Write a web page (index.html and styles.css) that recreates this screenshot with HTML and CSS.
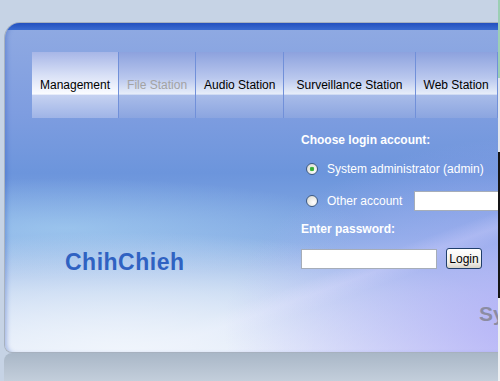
FILE: index.html
```html
<!DOCTYPE html>
<html lang="en">
<head>
<meta charset="UTF-8">
<title>Login</title>
<link rel="stylesheet" href="styles.css">
</head>
<body>
    <div class="page">
        <div class="panel">
            <div class="panel-band"></div>

            <!-- Station tabs -->
            <ul class="tabs">
                <li class="tab active">Management</li>
                <li class="tab disabled">File Station</li>
                <li class="tab">Audio Station</li>
                <li class="tab wide">Surveillance Station</li>
                <li class="tab">Web Station</li>
            </ul>

            <div class="login-area">
                <div class="brand">ChihChieh</div>

                <!-- Login form -->
                <form class="login-form">
                    <div class="form-label">Choose login account:</div>
                    <label class="option">
                        <span class="radio checked"></span>System administrator (admin)
                    </label>
                    <label class="option">
                        <span class="radio"></span>Other account
                        <input type="text" class="text-input account-input">
                    </label>
                    <div class="form-label">Enter password:</div>
                    <div class="password-row">
                        <input type="password" class="text-input password-input">
                        <button type="button" class="login-btn">Login</button>
                    </div>
                </form>
            </div>

            <div class="watermark">Synology</div>
        </div>
        <div class="reflection"></div>
        <div class="edge-strip"></div>
    </div>
</body>
</html>
```

FILE: styles.css
```css
body {
    margin: 0;
    background-color: #c6d3e5;
    font-family: "Liberation Sans", Arial, sans-serif;
    font-size: 12px;
    overflow: hidden;
}

.page {
    position: relative;
    width: 500px;
    height: 381px;
    padding-top: 22px;
    box-sizing: border-box;
    overflow: hidden;
}

/* Main panel */
.panel {
    position: relative;
    margin-left: 4px;
    width: 540px;
    height: 331px;
    box-sizing: border-box;
    border: 1px solid #a7b1bf;
    border-right: none;
    border-radius: 16px 0 0 8px;
    overflow: hidden;
    box-shadow: inset 4px 0 4px -2px rgba(45,85,190,0.35);
    background:
        radial-gradient(ellipse 320px 190px at 100% 92%, rgba(180,176,248,0.95), rgba(180,176,248,0)),
        radial-gradient(ellipse 420px 120px at 22% 100%, rgba(240,245,252,1), rgba(240,245,252,0)),
        radial-gradient(ellipse 300px 50px at 60px 205px, rgba(178,222,246,0.5), rgba(178,222,246,0)),
        linear-gradient(160deg, rgba(255,255,255,0) 70%, rgba(230,232,255,0.35) 73%, rgba(255,255,255,0) 76%),
        linear-gradient(180deg, #90aae2 0px, #7e9de0 90px, #6c95dc 150px, #85abe4 215px, #b6ceee 270px, #dce6f6 331px);
}

.panel-band {
    height: 7px;
    background: linear-gradient(#2350bf, #3a6bd0);
}

/* Tabs */
.tabs {
    list-style: none;
    margin: 22px 0 0 27px;
    padding: 0;
    display: flex;
    height: 66px;
}

.tab {
    display: flex;
    align-items: center;
    padding: 0 8px;
    color: #000;
    border-right: 1px solid #7190d9;
    background: linear-gradient(180deg, #8da2de 0%, #bac8ee 40%, #e8eef9 64%, #a9bce9 65%, #8ba5e0 100%);
}

.tab.wide {
    padding: 0 12px;
}

.tab.active {
    background: linear-gradient(180deg, #a7b6e7 0%, #d8e0f6 35%, #fbfcff 64%, #c6d2f1 65%, #9fb4e7 100%);
}

.tab.disabled {
    color: #a3a3a3;
}

/* Login area */
.login-area {
    display: flex;
}

.brand {
    width: 296px;
    box-sizing: border-box;
    padding: 130px 0 0 60px;
    font-size: 23px;
    font-weight: bold;
    line-height: 28px;
    letter-spacing: 0.5px;
    color: #2f62c2;
}

.login-form {
    display: flex;
    flex-direction: column;
    padding-top: 15px;
    color: #fff;
}

.form-label {
    font-weight: bold;
    line-height: 14px;
}

.form-label + .password-row {
    margin-top: 12px;
}

.option + .form-label {
    margin-top: 11px;
}

.option {
    display: flex;
    align-items: center;
    height: 20px;
    margin-top: 12px;
    white-space: nowrap;
}

.radio {
    width: 12px;
    height: 12px;
    box-sizing: border-box;
    margin: 0 9px 0 5px;
    border: 1px solid #3d5a82;
    border-radius: 50%;
    background: radial-gradient(circle at 65% 65%, #ffffff 0, #e6e6e0 60%, #cfcfc8 100%);
}

.radio.checked {
    background:
        radial-gradient(circle, #2fa52f 0, #45b845 2px, rgba(69,184,69,0) 2.6px),
        radial-gradient(circle at 65% 65%, #ffffff 0, #e6e6e0 60%, #cfcfc8 100%);
}

.text-input {
    height: 20px;
    box-sizing: border-box;
    border: 1px solid #a6adb8;
    background-color: #fff;
    padding: 0 3px;
    margin: 0;
}

.account-input {
    margin-left: 12px;
    width: 120px;
}

.password-row {
    display: flex;
    align-items: center;
}

.password-input {
    width: 136px;
}

.login-btn {
    margin-left: 9px;
    width: 36px;
    height: 21px;
    padding: 0;
    border: 1px solid #1f3e6a;
    border-radius: 3px;
    background: linear-gradient(#ffffff, #f0efea 70%, #d8d3c8);
    font-family: "Liberation Sans", Arial, sans-serif;
    font-size: 12px;
    color: #000;
}

/* Watermark in the corner */
.watermark {
    position: absolute;
    top: 280px;
    left: 474px;
    font-size: 21px;
    font-weight: bold;
    line-height: 21px;
    color: rgba(125,125,135,0.75);
}

.reflection {
    margin-left: 4px;
    height: 28px;
    border-radius: 8px 0 0 0;
    background: linear-gradient(#a9b7c7, #c3cedb);
}

.edge-strip {
    position: absolute;
    top: 0;
    right: 0;
    width: 2px;
    height: 381px;
    background: linear-gradient(#9ccfb4 0, #9ccfb4 78px, #e4e8ec 78px, #e4e8ec 152px, #151515 152px, #151515 298px, #eef0f2 298px);
}
```
